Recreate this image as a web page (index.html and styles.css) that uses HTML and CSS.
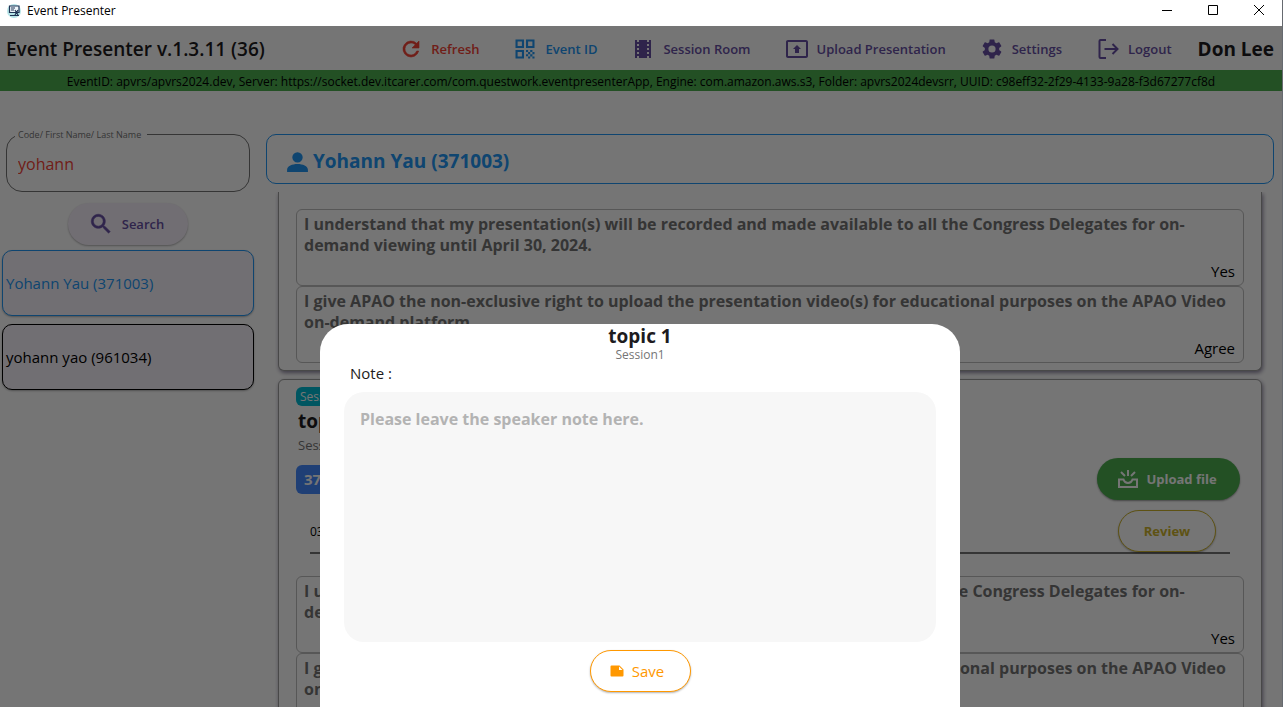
FILE: index.html
```html
<!DOCTYPE html>
<html lang="en">
<head>
  <meta charset="UTF-8" />
  <meta name="viewport" content="width=device-width, initial-scale=1.0" />
  <title>Event Presenter</title>
  <link rel="stylesheet" href="styles.css">
</head>
<body>
  <div class="window">
    <div class="titlebar">
      <svg class="app-icon" viewBox="0 0 14 14">
        <circle cx="7" cy="7" r="7" fill="#b5e3e6"/>
        <path d="M2.500 2h9.500v6.500H2.500z" fill="#eef6fb" stroke="#1f3354" stroke-width="1.200"/>
        <path d="M4 4h4M4 6h3M3 11.500h9M8 6l3 5M11 6l-3 5" stroke="#1f3354" stroke-width="1.200" fill="none"/>
      </svg>
      <span class="titlebar-text">Event Presenter</span>
      <div class="window-controls">
        <button aria-label="Minimize"><svg viewBox="0 0 12 12"><path d="M1 6.500h10"/></svg></button>
        <button aria-label="Maximize"><svg viewBox="0 0 12 12"><path d="M1.500 1.500h9v9h-9z"/></svg></button>
        <button aria-label="Close"><svg viewBox="0 0 12 12"><path d="M1 1l10 10M11 1L1 11"/></svg></button>
      </div>
    </div>

    <div class="app">
      <header class="header">
        <h1>Event Presenter v.1.3.11 (36)</h1>
        <nav class="menu">
          <button class="menu-btn red">
            <svg viewBox="0 0 24 24"><path d="M17.650 6.350A8 8 0 1 0 19.730 14h-2.080A6 6 0 1 1 12 6c1.660 0 3.140.690 4.220 1.780L13 11h7V4z" stroke="currentColor" stroke-width=".6"/></svg>
            Refresh
          </button>
          <button class="menu-btn blue">
            <svg viewBox="0 0 24 24"><path d="M2.500 2.500v8.500H11V2.500zm6.400 6.400H4.600V4.600h4.300zM2.500 13v8.500H11V13zm6.400 6.400H4.600v-4.300h4.300zM13 2.500v8.500h8.500V2.500zm6.400 6.400h-4.300V4.600h4.300zM13 13h2.100v2.100H13zM15.100 15.100h2.100v2.100h-2.100zM13 17.200h2.100v2.100H13zM15.100 19.400h2.100v2.100h-2.100zM17.200 17.200h2.200v2.200h-2.200zM17.200 13h2.200v2.100h-2.200zM19.400 15.100h2.100v2.100h-2.100zM19.400 19.400h2.100v2.100h-2.100z"/></svg>
            Event ID
          </button>
          <button class="menu-btn">
            <svg viewBox="0 0 24 24"><path d="M18 3v2h-2V3H8v2H6V3H4v18h2v-2h2v2h8v-2h2v2h2V3zM8 17H6v-2h2zm0-4H6v-2h2zm0-4H6V7h2zm10 8h-2v-2h2zm0-4h-2v-2h2zm0-4h-2V7h2z"/></svg>
            Session Room
          </button>
          <button class="menu-btn">
            <svg viewBox="0 0 24 24"><path d="M21 3H3c-1.110 0-2 .890-2 2v14c0 1.100.890 2 2 2h18c1.110 0 2-.900 2-2V5c0-1.110-.890-2-2-2zm0 16H3V5h18zM10 12H8l4-4 4 4h-2v4h-4z"/></svg>
            Upload Presentation
          </button>
          <button class="menu-btn">
            <svg viewBox="0 0 24 24"><path d="M19.140 12.940c.040-.300.060-.610.060-.940 0-.320-.020-.640-.070-.940l2.030-1.580a.49.49 0 0 0 .120-.610l-1.920-3.320a.488.488 0 0 0-.590-.220l-2.390.960c-.500-.380-1.030-.700-1.620-.940l-.360-2.540a.484.484 0 0 0-.480-.410h-3.840c-.240 0-.430.170-.470.410l-.360 2.540c-.590.240-1.130.570-1.620.940l-2.390-.960c-.220-.080-.470 0-.590.220L2.740 8.870c-.120.210-.080.470.120.610l2.030 1.580c-.050.300-.090.630-.090.940s.020.640.070.940l-2.030 1.580a.49.49 0 0 0-.120.610l1.920 3.320c.120.220.370.290.590.220l2.390-.960c.500.380 1.030.700 1.620.940l.360 2.540c.050.240.240.410.480.410h3.840c.240 0 .440-.170.470-.410l.360-2.540c.590-.240 1.130-.560 1.620-.940l2.390.960c.220.080.470 0 .590-.220l1.920-3.320a.49.49 0 0 0-.120-.610zM12 15.600A3.600 3.600 0 1 1 12 8.400a3.600 3.600 0 0 1 0 7.200z"/></svg>
            Settings
          </button>
          <button class="menu-btn">
            <svg viewBox="0 0 24 24"><path d="M10 3H4.500a1 1 0 0 0-1 1v16a1 1 0 0 0 1 1H10M8.500 12H21M16.500 7l5 5-5 5" fill="none" stroke="currentColor" stroke-width="2"/></svg>
            Logout
          </button>
        </nav>
        <strong class="user">Don Lee</strong>
      </header>

      <div class="status">EventID: apvrs/apvrs2024.dev, Server: https://socket.dev.itcarer.com/com.questwork.eventpresenterApp, Engine: com.amazon.aws.s3, Folder: apvrs2024devsrr, UUID: c98eff32-2f29-4133-9a28-f3d67277cf8d</div>

      <div class="content">
        <aside class="sidebar">
          <div class="search-field">
            <label for="keyword">Code/ First Name/ Last Name</label>
            <input type="text" id="keyword" value="yohann">
          </div>
          <button class="search-btn">
            <svg viewBox="0 0 24 24"><path d="M15.500 14h-.790l-.280-.270A6.500 6.500 0 1 0 13.730 14.430l.270.280v.790l5 4.990L20.490 19zm-6 0a4.500 4.500 0 1 1 0-9 4.500 4.500 0 0 1 0 9z" stroke="currentColor" stroke-width=".5"/></svg>
            Search
          </button>
          <button class="speaker selected">Yohann Yau (371003)</button>
          <button class="speaker">yohann yao (961034)</button>
        </aside>

        <main class="main">
          <h2 class="speaker-head">
            <svg viewBox="0 0 24 24"><path d="M12 13a5 5 0 1 0 0-10 5 5 0 0 0 0 10zM2 22v-2c0-3.500 5-5.500 10-5.500s10 2 10 5.500v2z"/></svg>
            Yohann Yau (371003)
          </h2>

          <div class="scroll">
            <section class="card card-cut">
              <div class="question">
                <p>I understand that my presentation(s) will be recorded and made available to all the Congress Delegates for on-demand viewing until April 30, 2024.</p>
                <span>Yes</span>
              </div>
              <div class="question">
                <p>I give APAO the non-exclusive right to upload the presentation video(s) for educational purposes on the APAO Video on-demand platform.</p>
                <span>Agree</span>
              </div>
            </section>

            <section class="card">
              <span class="tag">Session1</span>
              <h3>topic 1</h3>
              <p class="session">Session1</p>
              <div class="topic-row">
                <span class="code">371003</span>
                <button class="upload-btn">
                  <svg viewBox="0 0 24 24"><path d="M3 12.500h4.500c.800 2.500 2.200 3.500 4.500 3.500s3.700-1 4.500-3.500H21V20H3zM12 3v6M5 5l4 4M19 5l-4 4" fill="none" stroke="currentColor" stroke-width="2"/></svg>
                  Upload file
                </button>
              </div>
              <div class="file-row">
                <span>03</span>
                <button class="review-btn">Review</button>
              </div>
              <div class="question">
                <p>I understand that my presentation(s) will be recorded and made available to all the Congress Delegates for on-demand viewing until April 30, 2024.</p>
                <span>Yes</span>
              </div>
              <div class="question">
                <p>I give APAO the non-exclusive right to upload the presentation video(s) for educational purposes on the APAO Video on-demand platform.</p>
              </div>
            </section>
          </div>
        </main>
      </div>

      <div class="scrim">
        <div class="sheet" role="dialog" aria-labelledby="sheet-title">
          <h2 id="sheet-title">topic 1</h2>
          <p class="sheet-session">Session1</p>
          <label for="note">Note :</label>
          <textarea id="note" placeholder="Please leave the speaker note here."></textarea>
          <button class="save-btn">
            <svg viewBox="0 0 14 12"><path d="M1.500.500h8l4 4v6a1 1 0 0 1-1 1h-11a1 1 0 0 1-1-1v-9a1 1 0 0 1 1-1z"/><path d="M9 1.500v3.500h3.500z" fill="#fff"/></svg>
            Save
          </button>
        </div>
      </div>
    </div>
  </div>
</body>
</html>
```
FILE: styles.css
```css
* {
  margin: 0;
  padding: 0;
  box-sizing: border-box;
}

body {
  font-family: 'Open Sans', 'Noto Sans', sans-serif;
  font-size: 16px;
  color: #1d1b20;
  background: #fff;
}

button,
input,
textarea {
  font-family: inherit;
}

button {
  cursor: pointer;
}

svg {
  fill: currentColor;
  flex: none;
}

.window {
  display: flex;
  flex-direction: column;
  height: 100vh;
  border-right: 1px solid #666a70;
  overflow: hidden;
}

/* window title bar */
.titlebar {
  display: flex;
  align-items: center;
  height: 26px;
  flex: none;
  padding-left: 7px;
  padding-bottom: 5px;
  color: #000;
}

.app-icon {
  width: 14px;
  height: 14px;
}

.titlebar-text {
  margin-left: 6px;
  font-size: 12px;
}

.window-controls {
  display: flex;
  margin-left: auto;
}

.window-controls button {
  width: 46px;
  height: 20px;
  border: none;
  background: none;
}

.window-controls svg {
  width: 12px;
  height: 12px;
  fill: none;
  stroke: #000;
}

.app {
  position: relative;
  flex: 1;
  min-height: 0;
  display: flex;
  flex-direction: column;
}

.header {
  display: flex;
  align-items: center;
  height: 44px;
  flex: none;
  padding: 1px 8px 0 6px;
}

.header h1,
.user {
  font-size: 19px;
  font-weight: 700;
  white-space: nowrap;
}

.header h1 {
  font-weight: 600;
}

.menu {
  display: flex;
  gap: 34px;
  margin-left: auto;
  margin-right: 26px;
}

.menu-btn {
  display: flex;
  align-items: center;
  gap: 8px;
  border: none;
  background: none;
  color: #6750a4;
  font-size: 13px;
  font-weight: 600;
  white-space: nowrap;
}

.menu-btn svg {
  width: 24px;
  height: 24px;
}

.menu-btn.red {
  color: #f44336;
}

.menu-btn.blue {
  color: #2196f3;
}

.status {
  flex: none;
  height: 21px;
  line-height: 23px;
  background: #4caf50;
  color: #000;
  font-size: 12px;
  text-align: center;
  white-space: nowrap;
  overflow: hidden;
}

.content {
  flex: 1;
  min-height: 0;
  display: flex;
  padding-top: 43px;
}

/* left column */
.sidebar {
  width: 256px;
  flex: none;
  display: flex;
  flex-direction: column;
  padding: 0 2px;
}

.search-field {
  position: relative;
  margin: 0 4px;
}

.search-field label {
  position: absolute;
  left: 9px;
  top: -6px;
  padding: 0 6px 0 3px;
  background: #fff;
  color: #757575;
  font-size: 9px;
  line-height: 14px;
}

.search-field input {
  display: block;
  width: 100%;
  height: 58px;
  padding: 2px 11px 0;
  border: 1px solid #757575;
  border-radius: 16px;
  background: none;
  color: #f44336;
  font-size: 16px;
}

.search-btn {
  display: flex;
  align-items: center;
  justify-content: center;
  gap: 8px;
  align-self: center;
  width: 120px;
  height: 42px;
  margin: 11px 0 5px;
  padding-right: 4px;
  border: none;
  border-radius: 21px;
  background: #f7f0fb;
  box-shadow: 0 1px 2px rgba(0, 0, 0, 0.3);
  color: #6750a4;
  font-size: 13px;
  font-weight: 600;
}

.search-btn svg {
  width: 26px;
  height: 26px;
}

.speaker {
  height: 66px;
  margin-bottom: 8px;
  padding: 0 3px;
  border: 1px solid #000;
  border-radius: 10px;
  background: #f7f2fa;
  box-shadow: 0 1px 2px rgba(0, 0, 0, 0.3);
  color: #000;
  font-size: 15px;
  text-align: left;
}

.speaker.selected {
  border-color: #2196f3;
  color: #2196f3;
}

/* right column */
.main {
  flex: 1;
  min-width: 0;
  display: flex;
  flex-direction: column;
  padding: 0 8px 0 10px;
}

.speaker-head {
  display: flex;
  align-items: center;
  gap: 3px;
  flex: none;
  height: 50px;
  padding: 4px 18px 0;
  border: 1px solid #2196f3;
  border-radius: 10px;
  color: #2196f3;
  font-size: 19px;
}

.speaker-head svg {
  width: 25px;
  height: 25px;
}

.scroll {
  flex: 1;
  min-height: 0;
  margin-top: 8px;
  padding: 0 12px;
  overflow: hidden;
}

.card {
  padding: 7px 17px;
  margin-bottom: 8px;
  border: 1px solid #9e9e9e;
  border-radius: 6px;
  background: #fff;
  box-shadow: 1px 2px 4px #8a839c;
}

.card-cut {
  padding-top: 17px;
  border-top: none;
  border-radius: 0 0 6px 6px;
}

.question {
  height: 77px;
  padding: 4px 8px 5px 7px;
  border: 1px solid #bdbdbd;
  border-radius: 6px;
  display: flex;
  flex-direction: column;
  justify-content: space-between;
}

.question p {
  color: #757575;
  font-size: 16px;
  font-weight: 700;
  line-height: 21px;
}

.question span {
  align-self: flex-end;
  color: #000;
  font-size: 15px;
  line-height: 18px;
}

.tag {
  display: table;
  padding: 0 4px;
  border-radius: 6px;
  background: #00bcd4;
  color: #fff;
  font-size: 12px;
  line-height: 19px;
}

.card h3 {
  padding: 0 2px;
  font-size: 19px;
  line-height: 30px;
}

.session {
  padding: 0 2px;
  color: #757575;
  font-size: 13px;
  line-height: 18px;
}

.topic-row {
  display: flex;
  align-items: center;
  justify-content: space-between;
  margin: 4px 4px 0 0;
}

.code {
  padding: 0 8px;
  border-radius: 6px;
  background: #448aff;
  color: #fff;
  font-size: 15px;
  font-weight: 700;
  line-height: 29px;
}

.upload-btn {
  display: flex;
  align-items: center;
  justify-content: center;
  gap: 6px;
  width: 143px;
  height: 42px;
  padding-right: 4px;
  border: none;
  border-radius: 21px;
  background: #4caf50;
  box-shadow: 0 1px 2px rgba(0, 0, 0, 0.4);
  color: #fff;
  font-size: 13px;
  font-weight: 700;
}

.upload-btn svg {
  width: 24px;
  height: 24px;
}

.file-row {
  display: flex;
  align-items: center;
  justify-content: space-between;
  margin: 10px 14px 22px;
  padding-right: 14px;
  border-bottom: 2px solid #757575;
  color: #000;
  font-size: 12px;
}

.review-btn {
  width: 98px;
  height: 42px;
  border: 1px solid #cdb32b;
  border-radius: 21px;
  background: #fff;
  box-shadow: 0 1px 2px rgba(0, 0, 0, 0.3);
  color: #cdb32b;
  font-size: 13px;
  font-weight: 700;
}

/* note sheet */
.scrim {
  position: absolute;
  inset: 0;
  display: flex;
  align-items: flex-end;
  justify-content: center;
  padding-right: 2px;
  background: rgba(0, 0, 0, 0.54);
}

.sheet {
  display: flex;
  flex-direction: column;
  width: 640px;
  max-width: 100%;
  padding: 0 24px 15px;
  border-radius: 28px 28px 0 0;
  background: #fff;
}

.sheet h2 {
  font-size: 19px;
  line-height: 24px;
  text-align: center;
}

.sheet-session {
  color: #757575;
  font-size: 12px;
  line-height: 14px;
  text-align: center;
}

.sheet label {
  padding-left: 6px;
  font-size: 15px;
  line-height: 22px;
}

.sheet textarea {
  height: 250px;
  margin: 8px 0;
  padding: 16px;
  border: none;
  border-radius: 20px;
  background: #f7f7f7;
  font-size: 16px;
  font-weight: 700;
  resize: none;
}

.sheet textarea::placeholder {
  color: #b3b3b3;
}

.save-btn {
  display: flex;
  align-items: center;
  justify-content: center;
  gap: 8px;
  align-self: center;
  width: 101px;
  height: 42px;
  padding-right: 6px;
  border: 1px solid #ff9800;
  border-radius: 21px;
  background: #fff;
  box-shadow: 0 1px 2px rgba(0, 0, 0, 0.3);
  color: #ff9800;
  font-size: 15px;
}

.save-btn svg {
  width: 14px;
  height: 12px;
}
```
